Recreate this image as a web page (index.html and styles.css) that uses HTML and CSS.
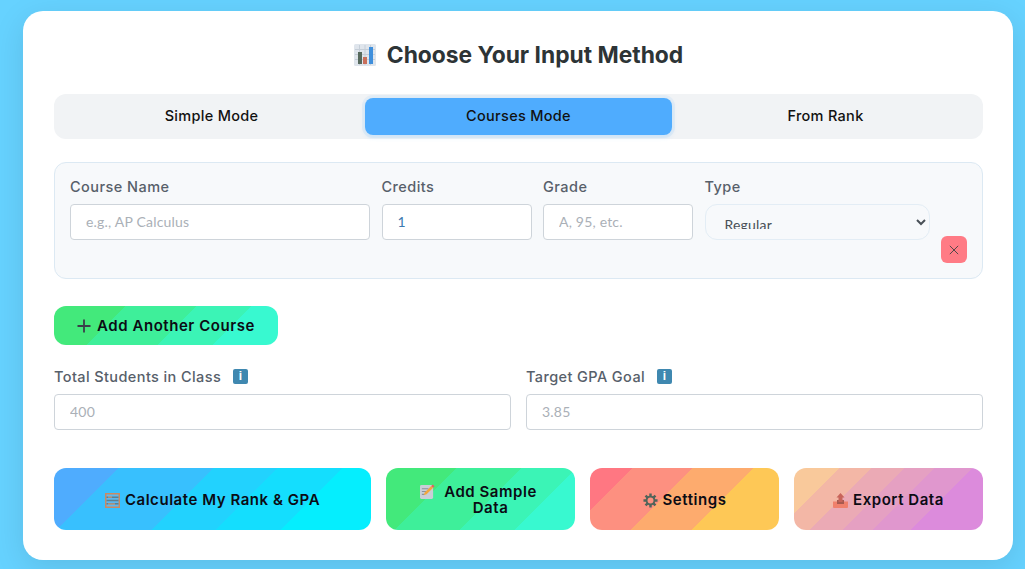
FILE: index.html
```html
<!DOCTYPE html>
<html lang="en">
<head>
<meta charset="utf-8">
<title>Choose Your Input Method</title>
<link rel="stylesheet" href="styles.css">
</head>
<body>
<main class="card">
  <h2 class="title">
    <svg class="title-icon" viewBox="0 0 22 22" aria-hidden="true"><rect width="22" height="22" rx="1.5" fill="#dfe5ec"/><path d="M1 5.500H21M1 10.500H21M1 15.500H21M5.500 1V21M11 1V21M16.500 1V21" stroke="#c5ced8" stroke-width="1"/><rect x="4" y="8" width="4" height="12" fill="#56695c"/><rect x="9" y="13" width="4" height="7" fill="#c9705c"/><rect x="15" y="3" width="4" height="17" fill="#3f8fdc"/></svg>
    <span>Choose Your Input Method</span>
  </h2>
  <div class="tabs">
    <button class="tab">Simple Mode</button>
    <button class="tab active">Courses Mode</button>
    <button class="tab">From Rank</button>
  </div>
  <section class="course-row">
    <div class="field">
      <label class="label">Course Name</label>
      <input class="input" placeholder="e.g., AP Calculus">
    </div>
    <div class="field">
      <label class="label">Credits</label>
      <input class="input value" value="1">
    </div>
    <div class="field">
      <label class="label">Grade</label>
      <input class="input" placeholder="A, 95, etc.">
    </div>
    <div class="field">
      <label class="label">Type</label>
      <select class="select"><option>Regular</option></select>
    </div>
    <button class="remove" aria-label="Remove">
      <svg viewBox="0 0 12 12" width="10" height="10" aria-hidden="true"><path d="M1 1L11 11M11 1L1 11" stroke="#444" stroke-width="1.100"/></svg>
    </button>
  </section>
  <button class="btn add">
    <svg viewBox="0 0 14 14" width="14" height="14" aria-hidden="true"><path d="M7 0.500V13.500M0.500 7H13.500" stroke="#3b3f4a" stroke-width="1.800"/></svg>
    <span>Add Another Course</span>
  </button>
  <div class="goals">
    <div class="field">
      <label class="label goal-label">Total Students in Class <i class="info">i</i></label>
      <input class="input" placeholder="400">
    </div>
    <div class="field">
      <label class="label goal-label">Target GPA Goal <i class="info">i</i></label>
      <input class="input" placeholder="3.85">
    </div>
  </div>
  <div class="actions">
    <button class="btn action blue">
      <svg class="emoji" viewBox="0 0 15 15" aria-hidden="true"><rect width="15" height="15" fill="#c98a63"/><rect x="1.500" y="1.500" width="12" height="12" fill="#5db8ef"/><path d="M1.500 4.200H13.500M1.500 7.500H13.500M1.500 10.800H13.500" stroke="#5e7f8e" stroke-width="1.400"/><path d="M3 11H10M3 4H7" stroke="#e8a070" stroke-width="1.200"/></svg>
      <span>Calculate My Rank &amp; GPA</span>
    </button>
    <button class="btn action green">
      <svg class="emoji up" viewBox="0 0 16 16" aria-hidden="true"><rect y="1" width="14" height="15" rx="1.500" fill="#c9ced6"/><path d="M2 5H9M2 8H7M2 11H5" stroke="#8a929c" stroke-width="1.200"/><path d="M4 12L5 9L12 2L14 4L7 11Z" fill="#f2a63c"/><path d="M12 2L13.500 0.500L15.500 2.500L14 4Z" fill="#e2605c"/></svg>
      <span class="wrap-text">Add Sample Data</span>
    </button>
    <button class="btn action coral">
      <svg class="emoji" viewBox="0 0 16 16" aria-hidden="true"><path d="M8 0.500V4M8 12V15.500M0.500 8H4M12 8H15.500M2.700 2.700L5.200 5.200M10.800 10.800L13.300 13.300M13.300 2.700L10.800 5.200M5.200 10.800L2.700 13.300" stroke="#50645a" stroke-width="2.600"/><circle cx="8" cy="8" r="4.200" fill="none" stroke="#50645a" stroke-width="2"/></svg>
      <span>Settings</span>
    </button>
    <button class="btn action pink">
      <svg class="emoji" viewBox="0 0 15 15" aria-hidden="true"><path d="M0 8.500H15V14A1 1 0 0 1 14 15H1A1 1 0 0 1 0 14Z" fill="#f0806c"/><rect x="4" y="7" width="7" height="4" fill="#a85a50"/><path d="M7.500 0L11.500 4.500H9.500V9H5.500V4.500H3.500Z" fill="#c8645a"/></svg>
      <span>Export Data</span>
    </button>
  </div>
</main>
</body>
</html>
```
FILE: styles.css
```css
* { box-sizing: border-box; }
html, body { height: 100%; }
body {
  margin: 0;
  padding: 11px 12px 0 23px;
  background: #66d2ff;
  font-family: Inter, "Liberation Sans", sans-serif;
  overflow: hidden;
}
.card {
  height: 549px;
  padding: 30px 30px 30px 31px;
  background: #fff;
  border-radius: 20px;
  box-shadow: 0 8px 32px rgba(0, 0, 0, 0.1);
}
.title {
  display: flex;
  align-items: center;
  justify-content: center;
  gap: 11px;
  height: 27px;
  margin: 0;
  color: #2d3436;
  font-size: 22.800px;
  font-weight: 700;
}
.title-icon { width: 22px; height: 22px; }
.tabs {
  display: grid;
  grid-template-columns: repeat(3, 1fr);
  height: 45px;
  margin-top: 26px;
  padding: 4px;
  background: #f1f3f5;
  border-radius: 12px;
}
.tab {
  padding: 0 0 2px;
  border: 0;
  border-radius: 8px;
  background: transparent;
  color: #111;
  font: 500 14.500px Inter, sans-serif;
  letter-spacing: 0.300px;
}
.tab.active {
  background: #4facfe;
  box-shadow: 0 2px 4px 1px rgba(79, 172, 254, 0.15), 0 0 0 3px rgba(79, 172, 254, 0.08);
}
.course-row {
  display: grid;
  grid-template-columns: 300fr 150fr 150fr 225fr 26fr;
  column-gap: 11.500px;
  align-items: start;
  height: 117px;
  margin-top: 23px;
  padding: 15px 15px 0;
  background: #f7f9fb;
  border: 1px solid #dce9f3;
  border-radius: 12px;
}
.field { display: flex; flex-direction: column; min-width: 0; }
.label {
  height: 17px;
  margin-bottom: 9px;
  color: #57606a;
  font-size: 14.500px;
  font-weight: 500;
  letter-spacing: 0.450px;
  line-height: 17px;
}
.input {
  width: 100%;
  height: 36px;
  padding: 0 15px 2px;
  background: #fff;
  border: 1px solid #ced4da;
  border-radius: 4px;
  font: 400 14px Lato, sans-serif;
  letter-spacing: 0.200px;
  color: #495057;
  outline: 0;
}
.input::placeholder { color: #aab0b7; opacity: 1; }
.value { color: #3d7ab0; }
.select {
  width: 100%;
  height: 36px;
  padding: 10px 15px;
  background: #f7f9fb;
  border: 1px solid #e3edf5;
  border-radius: 12px;
  color: #495057;
  font: 400 14px Lato, sans-serif;
  letter-spacing: 0.200px;
  outline: 0;
}
.remove {
  display: flex;
  align-items: center;
  justify-content: center;
  width: 26px;
  height: 27px;
  margin-top: 58px;
  padding: 0;
  background: #ff7b85;
  border: 0;
  border-radius: 6px;
}
.btn {
  display: flex;
  align-items: center;
  justify-content: center;
  border: 0;
  border-radius: 12px;
  color: #0b0b14;
  font: 600 15px Inter, sans-serif;
  letter-spacing: 0.550px;
}
.add {
  gap: 6px;
  width: 224px;
  height: 39px;
  margin-top: 27px;
  background: linear-gradient(135deg, #43e97b 27%, #3eef9a 27% 54%, #3bf4b6 54% 75%, #38f9d0 75%);
}
.goals {
  display: grid;
  grid-template-columns: 457px 457px;
  column-gap: 15px;
  margin-top: 23px;
}
.goal-label {
  display: flex;
  align-items: center;
  gap: 12px;
  height: 17px;
  margin-bottom: 9px;
  letter-spacing: 0.400px;
}
.info {
  display: flex;
  align-items: center;
  justify-content: center;
  width: 15px;
  height: 15px;
  margin-top: -1px;
  background: #3f88b0;
  border-radius: 2px;
  color: #fff;
  font: 700 12px "Liberation Sans", sans-serif;
}
.actions {
  display: grid;
  grid-template-columns: 317fr 189fr 189fr 189fr;
  column-gap: 15px;
  margin-top: 38px;
}
.action { gap: 5px; height: 62px; padding: 2px 16px 0; line-height: 16px; }
.blue { background: linear-gradient(135deg, #4facfe 17%, #38c0fe 17% 42%, #22d2fe 42% 59%, #14defe 59% 76%, #05eefe 76%); }
.green { background: linear-gradient(135deg, #43e97b 28%, #3eef9a 28% 54%, #3bf4b6 54% 76%, #38f9d0 76%); }
.coral { background: linear-gradient(135deg, #ff7782 17%, #fd9080 17% 41%, #fdab6e 41% 65%, #fec856 65%); }
.pink { background: linear-gradient(135deg, #f9c99b 18%, #f3b7a6 18% 31%, #ebaab5 31% 44%, #e5a0c2 44% 56%, #e097ce 56% 71%, #dc8bdc 71%); }
.emoji { flex: none; width: 15px; height: 15px; }
.up { align-self: flex-start; margin-top: 14px; }
.wrap-text { width: 102px; text-align: center; }
```
